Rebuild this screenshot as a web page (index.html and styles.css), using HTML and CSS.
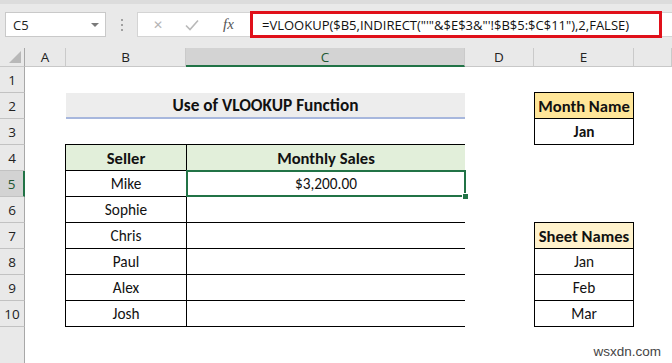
FILE: index.html
```html
<!DOCTYPE html>
<html lang="en">
<head>
  <meta charset="UTF-8" />
  <title>Use of VLOOKUP Function</title>
  <link rel="stylesheet" href="styles.css">
</head>
<body>

  <div class="toolbar">
    <div class="namebox">
      <span>C5</span>
      <span class="drop"></span>
    </div>
    <div class="dots"><i></i><i></i><i></i></div>
    <div class="fbar">
      <div class="buttons">
        <span class="btn cancel">&#x2715;</span>
        <span class="btn enter">
          <svg width="14" height="12" viewBox="0 0 14 12"><path d="M1 6.5 L5 10.5 L13 1.5" fill="none" stroke="#b9b9b9" stroke-width="1.6"/></svg>
        </span>
        <span class="btn fx">fx</span>
      </div>
      <div class="formula">=VLOOKUP($B5,INDIRECT("'"&amp;$E$3&amp;"'!$B$5:$C$11"),2,FALSE)</div>
    </div>
  </div>

  <div class="sheet">
    <div class="corner"><span class="tri"></span></div>
    <div class="colhead">A</div>
    <div class="colhead">B</div>
    <div class="colhead active">C</div>
    <div class="colhead">D</div>
    <div class="colhead">E</div>
    <div class="colhead"></div>

    <div class="rowhead" style="grid-row: 2">1</div>
    <div class="rowhead" style="grid-row: 3">2</div>
    <div class="rowhead" style="grid-row: 4">3</div>
    <div class="rowhead" style="grid-row: 5">4</div>
    <div class="rowhead active" style="grid-row: 6">5</div>
    <div class="rowhead" style="grid-row: 7">6</div>
    <div class="rowhead" style="grid-row: 8">7</div>
    <div class="rowhead" style="grid-row: 9">8</div>
    <div class="rowhead" style="grid-row: 10">9</div>
    <div class="rowhead" style="grid-row: 11">10</div>
    <div class="rowhead rest"></div>

    <div class="title">Use of VLOOKUP Function</div>

    <div class="table sales">
      <div class="cell head">Seller</div>
      <div class="cell head">Monthly Sales</div>
      <div class="cell">Mike</div>
      <div class="cell selected">$3,200.00<span class="handle"></span></div>
      <div class="cell">Sophie</div>
      <div class="cell"></div>
      <div class="cell">Chris</div>
      <div class="cell"></div>
      <div class="cell">Paul</div>
      <div class="cell"></div>
      <div class="cell">Alex</div>
      <div class="cell"></div>
      <div class="cell">Josh</div>
      <div class="cell"></div>
    </div>

    <div class="table month">
      <div class="cell head">Month Name</div>
      <div class="cell bold">Jan</div>
    </div>

    <div class="table sheets">
      <div class="cell head">Sheet Names</div>
      <div class="cell">Jan</div>
      <div class="cell">Feb</div>
      <div class="cell">Mar</div>
    </div>

    <div class="mark">wsxdn.com</div>
  </div>

</body>
</html>
```

FILE: styles.css
```css
body {
  margin: 0;
  width: 672px;
  height: 363px;
  overflow: hidden;
  font-family: Carlito, "Liberation Sans", Arial, sans-serif;
  background: #fff;
}

/* formula bar */

.toolbar {
  height: 48px;
  border-top: 4px solid #dcdcdc;
  background: #e9e9e9;
  display: flex;
  align-items: flex-start;
  padding-top: 8px;
  box-sizing: border-box;
}

.namebox {
  margin-left: 5px;
  width: 101px;
  height: 25px;
  box-sizing: border-box;
  background: #fff;
  border: 1px solid #c9c9c9;
  display: flex;
  align-items: center;
  justify-content: space-between;
  padding: 0 6px 0 7px;
  font-family: "Open Sans", sans-serif;
  font-size: 13px;
  color: #222;
}

.drop {
  width: 0;
  height: 0;
  border-left: 4px solid transparent;
  border-right: 4px solid transparent;
  border-top: 4px solid #7a7a7a;
}

.dots {
  width: 31px;
  height: 25px;
  display: flex;
  flex-direction: column;
  align-items: center;
  justify-content: center;
  gap: 3px;
}

.dots i {
  width: 2px;
  height: 2px;
  background: #a0a0a0;
}

.fbar {
  flex: 1;
  height: 25px;
  background: #fff;
  border: 1px solid #d4d4d4;
  border-right: none;
  box-sizing: border-box;
  display: flex;
  position: relative;
}

.buttons {
  width: 112px;
  display: flex;
  align-items: center;
}

.btn {
  color: #b5b5b5;
  font-size: 13px;
}

.cancel {
  margin-left: 15px;
  font-family: "DejaVu Sans", sans-serif;
  font-size: 12px;
}

.enter {
  margin-left: 22px;
  display: flex;
}

.fx {
  margin-left: 24px;
  color: #555;
  font-family: "Liberation Serif", serif;
  font-style: italic;
  font-size: 15px;
}

.formula {
  position: absolute;
  left: 112px;
  top: -2px;
  width: 412px;
  height: 27px;
  box-sizing: border-box;
  border: 3px solid #e0101a;
  padding-left: 9px;
  display: flex;
  align-items: center;
  font-family: "Open Sans", sans-serif;
  font-size: 13px;
  color: #111;
  white-space: nowrap;
}

/* sheet grid */

.sheet {
  display: grid;
  grid-template-columns: 25px 41px 120px 279px 69px 100px 1fr;
  grid-template-rows: 19px repeat(10, 26px) 1fr;
  height: 315px;
  position: relative;
}

.corner {
  background: #e9e9e9;
  border-right: 1px solid #a8a8a8;
  border-bottom: 1px solid #c8c8c8;
  box-sizing: border-box;
  position: relative;
}

.tri {
  position: absolute;
  right: 3px;
  bottom: 3px;
  width: 0;
  height: 0;
  border-left: 12px solid transparent;
  border-bottom: 12px solid #b8b8b8;
}

.colhead {
  background: #e9e9e9;
  border-right: 1px solid #cacaca;
  border-bottom: 1px solid #c8c8c8;
  box-sizing: border-box;
  display: flex;
  align-items: center;
  justify-content: center;
  font-family: "Open Sans", sans-serif;
  font-size: 13.5px;
  color: #222;
}

.colhead.active {
  background: #d3d3d3;
  border-bottom: 2px solid #217346;
  color: #215732;
}

.rowhead {
  grid-column: 1;
  background: #e9e9e9;
  border-right: 1px solid #a8a8a8;
  border-bottom: 1px solid #c2c2c2;
  box-sizing: border-box;
  display: flex;
  align-items: center;
  justify-content: center;
  font-family: "Open Sans", sans-serif;
  font-size: 13.5px;
  color: #222;
}

.rowhead.active {
  background: #d3d3d3;
  border-right: 2px solid #217346;
  color: #215732;
}

.rowhead.rest {
  grid-row: 12;
  border-bottom: none;
}

.title {
  grid-column: 3 / 5;
  grid-row: 3;
  background: #ededed;
  border-bottom: 2px solid #a7b7dd;
  display: flex;
  align-items: center;
  justify-content: center;
  font-weight: bold;
  font-size: 17.3px;
  color: #111;
}

.table {
  display: grid;
  background: #000;
  gap: 1px;
  padding: 1px;
  align-self: start;
}

.sales {
  grid-column: 3 / 5;
  grid-row: 5 / 12;
  margin-left: -1px;
  margin-top: -1px;
  grid-template-columns: 120px 278px;
  grid-template-rows: repeat(7, 25px);
}

.month {
  grid-column: 6;
  grid-row: 3 / 5;
  margin-top: -1px;
  grid-template-columns: 98px;
  grid-template-rows: repeat(2, 25px);
}

.sheets {
  grid-column: 6;
  grid-row: 8 / 12;
  margin-top: -1px;
  grid-template-columns: 98px;
  grid-template-rows: repeat(4, 25px);
}

.cell {
  background: #fff;
  display: flex;
  align-items: center;
  justify-content: center;
  font-size: 15.3px;
  color: #111;
  position: relative;
}

.cell.head {
  font-weight: bold;
  font-size: 16.6px;
}

.sales .head {
  background: #e2efda;
}

.month .head {
  background: #ffe699;
}

.sheets .head {
  background: #fff2cc;
}

.cell.bold {
  font-weight: bold;
}

.cell.selected {
  outline: 2px solid #217346;
  outline-offset: -1px;
  z-index: 1;
}

.handle {
  position: absolute;
  right: -4px;
  bottom: -4px;
  width: 5px;
  height: 5px;
  background: #217346;
  border: 1px solid #fff;
}

.mark {
  position: absolute;
  right: 11px;
  bottom: 4px;
  font-family: "Liberation Sans", Arial, sans-serif;
  font-size: 13.5px;
  color: #444;
}
```
